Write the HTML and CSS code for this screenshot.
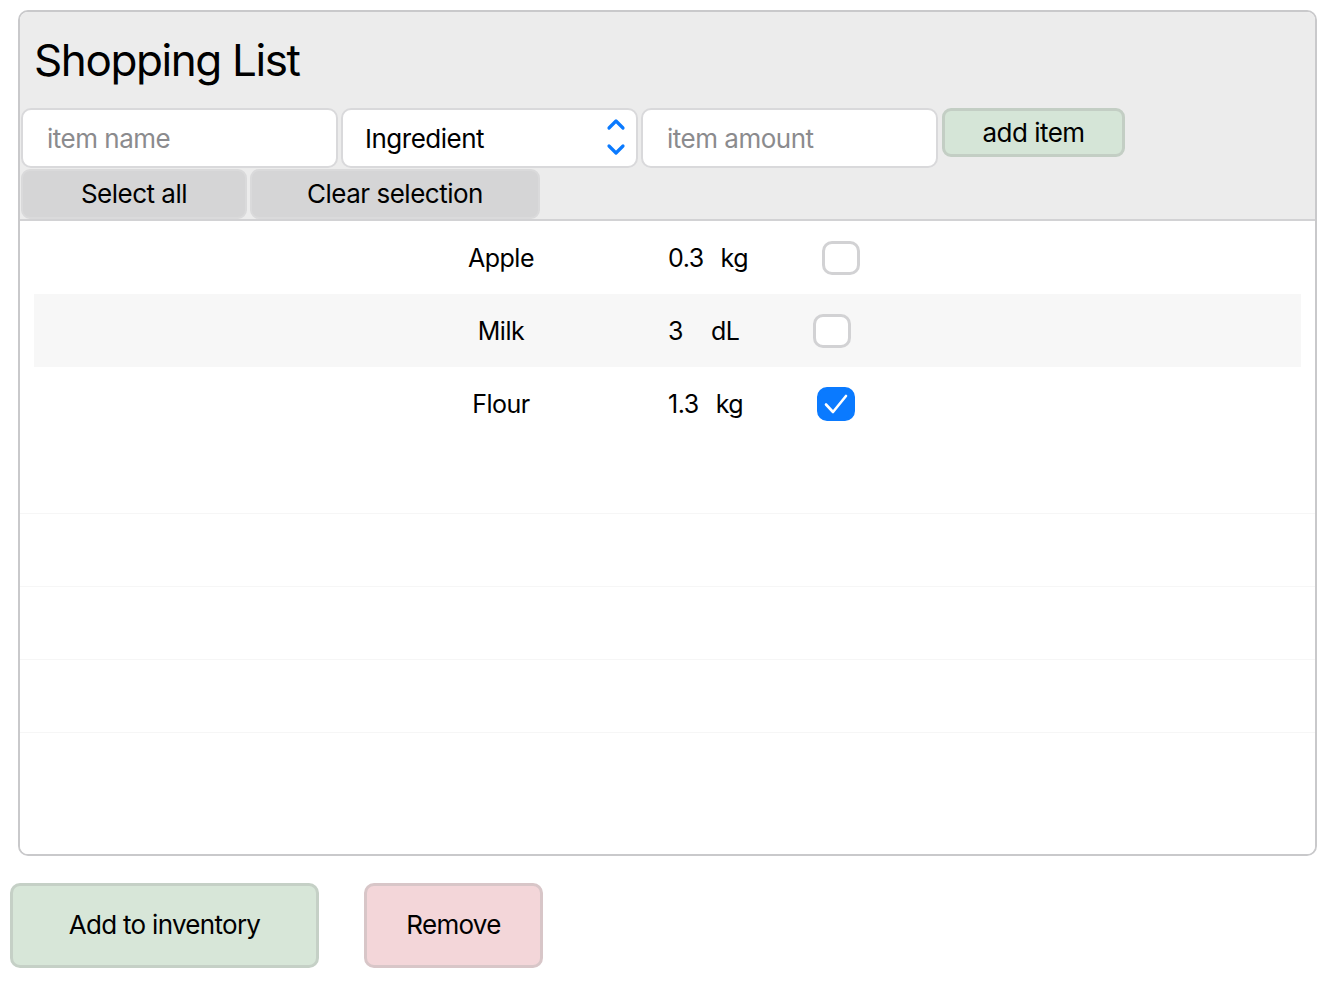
FILE: index.html
```html
<!DOCTYPE html>
<html lang="en">
<head>
<meta charset="utf-8">
<title>Shopping List</title>
<link rel="stylesheet" href="styles.css">
</head>
<body>
<div class="panel">
  <div class="header">
    <h1 class="title">Shopping List</h1>
    <div class="form-row">
      <input class="field field-name" type="text" placeholder="item name">
      <div class="field select">
        <span class="select-value">Ingredient</span>
        <svg class="select-arrows" width="20" height="40" viewBox="0 0 20 40">
          <path d="M3 10 L10 3 L17 10" fill="none" stroke="#0a7aff" stroke-width="3.2" stroke-linecap="round" stroke-linejoin="round"/>
          <path d="M3 28 L10 35 L17 28" fill="none" stroke="#0a7aff" stroke-width="3.2" stroke-linecap="round" stroke-linejoin="round"/>
        </svg>
      </div>
      <input class="field field-amount" type="text" placeholder="item amount">
      <button class="btn btn-add" type="button">add item</button>
    </div>
    <div class="select-row">
      <button class="btn btn-gray btn-select-all" type="button">Select all</button>
      <button class="btn btn-gray btn-clear" type="button">Clear selection</button>
    </div>
  </div>
  <div class="list">
    <div class="row">
      <span class="name">Apple</span>
      <span class="amount">0.3</span>
      <span class="unit">kg</span>
      <span class="check"></span>
    </div>
    <div class="row row-alt">
      <span class="name">Milk</span>
      <span class="amount">3</span>
      <span class="unit unit-wide">dL</span>
      <span class="check"></span>
    </div>
    <div class="row">
      <span class="name">Flour</span>
      <span class="amount">1.3</span>
      <span class="unit">kg</span>
      <span class="check checked">
        <svg width="26" height="22" viewBox="0 0 26 22"><path d="M3 11.5 L10 19 L23 3" fill="none" stroke="#fff" stroke-width="2.6" stroke-linecap="round" stroke-linejoin="round"/></svg>
      </span>
    </div>
    <div class="row row-empty"></div>
    <div class="row row-empty row-line"></div>
    <div class="row row-empty row-line"></div>
    <div class="row row-empty row-line"></div>
    <div class="row row-empty row-line"></div>
  </div>
</div>
<div class="actions">
  <button class="btn btn-big btn-inventory" type="button">Add to inventory</button>
  <button class="btn btn-big btn-remove" type="button">Remove</button>
</div>
</body>
</html>
```
FILE: styles.css
```css
* { box-sizing: border-box; }
body {
  margin: 0;
  background: #ffffff;
  font-family: Inter, "Noto Sans", "Liberation Sans", sans-serif;
  color: #000;
}
.panel {
  margin: 10px 17px 0 18px;
  height: 846px;
  border: 2px solid #c9c9cb;
  border-radius: 10px;
  overflow: hidden;
  background: #fff;
  display: flex;
  flex-direction: column;
}
.header {
  background: #ececec;
  border-bottom: 2px solid #d2d2d4;
  padding: 0 0 0 1px;
}
.title {
  margin: 0;
  padding-left: 13px;
  height: 96px;
  line-height: 96px;
  font-size: 44px;
  font-weight: 400;
  letter-spacing: -1.4px;
}
.form-row {
  display: flex;
  align-items: flex-start;
  gap: 3px;
  height: 60px;
}
.field {
  height: 60px;
  border: 2px solid #d9d9db;
  border-radius: 10px;
  background: #fff;
  font-family: inherit;
  font-size: 26px;
  letter-spacing: -0.5px;
  color: #000;
  padding: 0 0 0 24px;
  outline: none;
}
.field::placeholder { color: #8b8b8e; }
.field-name { width: 317px; }
.field-amount { width: 297px; }
.select {
  width: 297px;
  display: flex;
  align-items: center;
  justify-content: space-between;
  padding-left: 22px;
  padding-right: 10px;
}
.select-arrows { display: block; }
.btn {
  font-family: inherit;
  color: #000;
  letter-spacing: -0.5px;
  cursor: pointer;
}
.btn-add {
  margin-left: 1px;
  width: 183px;
  height: 49px;
  background: #d5e5d7;
  border: 3px solid #c3cec4;
  border-radius: 9px;
  font-size: 26px;
  padding: 0;
}
.select-row {
  display: flex;
  gap: 3px;
  height: 51px;
  padding-top: 1px;
}
.btn-gray {
  height: 50px;
  background: #d5d5d6;
  border: 2px solid #dadadb;
  border-radius: 9px;
  font-size: 26px;
  padding: 0 0 2px;
}
.btn-select-all { width: 226px; }
.btn-clear { width: 290px; }
.list {
  flex: 1;
  background: #fff;
}
.row {
  height: 73px;
  display: flex;
  align-items: center;
  font-size: 25px;
  letter-spacing: -0.5px;
  margin: 0 14px;
}
.row-alt { background: #f7f7f7; }
.row-line { border-top: 1px solid #f6f6f6; margin: 0; }
.name {
  width: 200px;
  margin-left: 367px;
  text-align: center;
}
.amount { margin-left: 67px; margin-right: 17px; }
.unit { margin-right: 74px; }
.unit-wide { margin-left: 11px; }
.check {
  width: 38px;
  height: 34px;
  border: 3px solid #d2d2d4;
  border-radius: 10px;
  background: #fff;
  display: flex;
  align-items: center;
  justify-content: center;
}
.check.checked {
  background: #0a7aff;
  border-color: #0a7aff;
}
.check svg { display: block; }
.actions {
  display: flex;
  gap: 45px;
  margin: 27px 0 0 10px;
}
.btn-big {
  height: 85px;
  border-radius: 10px;
  border: 3px solid;
  font-size: 26px;
  letter-spacing: -0.7px;
  padding: 0 0 2px;
}
.btn-inventory {
  width: 309px;
  background: #d7e6d8;
  border-color: #c5d0c6;
}
.btn-remove {
  width: 179px;
  background: #f3d6d9;
  border-color: #d8c6c8;
}
```
